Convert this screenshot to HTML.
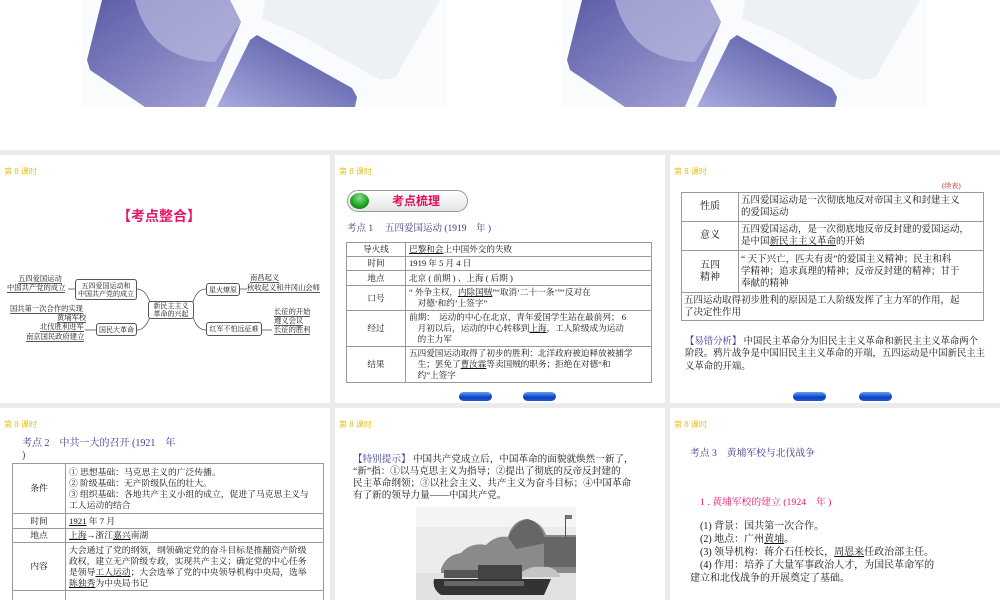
<!DOCTYPE html>
<html><head><meta charset="utf-8"><style>
*{margin:0;padding:0;box-sizing:border-box}
body{width:1000px;height:600px;overflow:hidden;background:#ebebeb;position:relative;font-family:"Liberation Serif","Noto Serif CJK SC","Noto Sans CJK SC",serif;color:#111}
.a{position:absolute;white-space:nowrap}
.s{position:absolute;background:#fff;overflow:hidden}
.k{position:absolute;left:4px;top:11px;font-size:8px;color:#e8c020;font-family:"Liberation Sans","Noto Sans CJK SC",sans-serif}
table{position:absolute;border-collapse:collapse}
td{border:1px solid #999;vertical-align:middle;padding:0 3px}
td.c{text-align:center}
.bx{position:absolute;border:1px solid #555;border-radius:3px;background:#fff;font-size:7px;line-height:8px;text-align:center;display:flex;align-items:center;justify-content:center}
.u{text-decoration:underline}
.mm{position:absolute;font-size:7.3px;line-height:8px;border-bottom:1px solid #555;white-space:nowrap}
.btn{position:absolute;width:33px;height:9px;border-radius:5px;background:linear-gradient(#5aa0ff,#0c3fbf 60%,#2458d8);}
</style></head><body>
<div class="s" style="left:0;top:0;width:1000px;height:150px">
<svg width="1000" height="150" style="position:absolute;left:0;top:0">
<defs><linearGradient id="g1" x1="0" y1="0" x2="1" y2="1"><stop offset="0" stop-color="#5a5ca8"/><stop offset="1" stop-color="#a9a7d8"/></linearGradient>
<linearGradient id="g2" x1="0" y1="1" x2="1" y2="0"><stop offset="0" stop-color="#a7abdc"/><stop offset="1" stop-color="#4a4c9c"/></linearGradient></defs>
<g id="im">
<rect x="82" y="0" width="365" height="107" fill="#fafbfc"/>
<polygon points="265,0 440,0 395,78 380,80 300,35 262,18" fill="#edf0f5"/>
<polygon points="102,0 230,0 241,22 205,107 145,107 90,70 87,60" fill="url(#g1)"/>
<path d="M135,0 Q150,60 215,62 L241,22 L230,0Z" fill="#b8b8e0" opacity=".7"/>
<polygon points="257,35 352,88 357,97 355,107 217,107 250,40" fill="url(#g2)"/>
</g>
<use href="#im" x="480"/>
</svg>
</div>

<!-- row1 slide1 -->
<div class="s" style="left:0;top:155px;width:330px;height:248px">
<div class="k">第 8 课时</div>
<div class="a" style="left:117px;top:51px;font-size:14px;font-weight:bold;color:#e0186c;font-family:'Liberation Sans','Noto Sans CJK SC',sans-serif">【考点整合】</div>
<svg width="330" height="248" style="position:absolute;left:0;top:0" fill="none" stroke="#555" stroke-width=".8">
<path d="M137,134 Q145,134 150,147"/><path d="M137,175 Q145,175 150,162"/>
<path d="M193,147 Q197,134 206,134"/><path d="M193,162 Q197,175 206,175"/>
<path d="M68,134 L75,134"/><path d="M85,175 L96,175"/>
<path d="M240,134 L247,134"/><path d="M262,175 L272,175"/>
</svg>
<div class="bx" style="left:148px;top:146px;width:46px;height:18px">新民主主义<br>革命的兴起</div>
<div class="bx" style="left:75px;top:124px;width:62px;height:21px">五四爱国运动和<br>中国共产党的成立</div>
<div class="bx" style="left:96px;top:168px;width:41px;height:13px">国民大革命</div>
<div class="bx" style="left:206px;top:128px;width:34px;height:13px">星火燎原</div>
<div class="bx" style="left:206px;top:167px;width:56px;height:14px">红军不怕远征难</div>
<div class="mm" style="left:18px;top:120px">五四爱国运动</div>
<div class="mm" style="left:7px;top:129px">中国共产党的成立</div>
<div class="mm" style="left:10px;top:150px">国共第一次合作的实现</div>
<div class="mm" style="left:57px;top:159px">黄埔军校</div>
<div class="mm" style="left:40px;top:168px">北伐胜利进军</div>
<div class="mm" style="left:26px;top:178px">南京国民政府建立</div>
<div class="mm" style="left:250px;top:119px">南昌起义</div>
<div class="mm" style="left:247px;top:129px">秋收起义和井冈山会师</div>
<div class="mm" style="left:274px;top:153px">长征的开始</div>
<div class="mm" style="left:274px;top:162px">遵义会议</div>
<div class="mm" style="left:274px;top:171px">长征的胜利</div>
</div>

<!-- row1 slide2 -->
<div class="s" style="left:335px;top:155px;width:330px;height:248px">
<div class="k">第 8 课时</div>
<div style="position:absolute;left:12px;top:35px;width:121px;height:22px;border-radius:11px;border:1px solid #999;background:linear-gradient(#fff,#e4e4e4)"></div>
<div style="position:absolute;left:15px;top:38px;width:19px;height:16px;border-radius:50%;background:radial-gradient(circle at 50% 30%,#8fe08a,#18a020 60%,#0a6a10)"></div>
<div class="a" style="left:57px;top:37px;font-size:12px;font-weight:bold;color:#e0105a;font-family:'Liberation Sans','Noto Sans CJK SC',sans-serif">考点梳理</div>
<div class="a" style="left:12px;top:65px;font-size:9.5px;color:#3a3a8a">考点 1　 五四爱国运动 (1919　年 )</div>
<table style="left:11px;top:87px;width:306px;font-size:8.6px;line-height:11px">
<tr style="height:14px"><td class="c" style="width:59px">导火线</td><td><span class="u">巴黎和会</span>上中国外交的失败</td></tr>
<tr style="height:14px"><td class="c">时间</td><td>1919 年 5 月 4 日</td></tr>
<tr style="height:15px"><td class="c">地点</td><td>北京 ( 前期 ) 、上海 ( 后期 )</td></tr>
<tr style="height:25px"><td class="c">口号</td><td>“ 外争主权，<span class="u">内除国贼</span>”“取消‘二十一条’”“反对在<br>　对德‘和约’上签字”</td></tr>
<tr style="height:36px"><td class="c">经过</td><td>前期：　运动的中心在北京，青年爱国学生站在最前列； 6<br>　月初以后，运动的中心转移到<span class="u">上海</span>，工人阶级成为运动<br>　的主力军</td></tr>
<tr style="height:36px"><td class="c">结果</td><td>五四爱国运动取得了初步的胜利：北洋政府被迫释放被捕学<br>　生；罢免了<span class="u">曹汝霖</span>等卖国贼的职务；拒绝在对德“和<br>　约”上签字</td></tr>
</table>
<div class="btn" style="left:124px;top:237px"></div><div class="btn" style="left:188px;top:237px"></div>
</div>

<!-- row1 slide3 -->
<div class="s" style="left:670px;top:155px;width:330px;height:248px">
<div class="k">第 8 课时</div>
<div class="a" style="left:272px;top:26px;font-size:7px;color:#d02020">(续表)</div>
<table style="left:11px;top:37px;width:303px;font-size:9.5px;line-height:12px">
<tr style="height:29px"><td class="c" style="width:57px;font-size:10px">性质</td><td style="padding:0 2px">五四爱国运动是一次彻底地反对帝国主义和封建主义<br>的爱国运动</td></tr>
<tr style="height:29px"><td class="c" style="font-size:10px">意义</td><td style="padding:0 2px">五四爱国运动，是一次彻底地反帝反封建的爱国运动，<br>是中国<span class="u">新民主主义革命</span>的开始</td></tr>
<tr style="height:42px"><td class="c" style="font-size:10px">五四<br>精神</td><td style="padding:0 2px">“ 天下兴亡，匹夫有责”的爱国主义精神；民主和科<br>学精神；追求真理的精神；反帝反封建的精神；甘于<br>奉献的精神</td></tr>
<tr style="height:28px"><td colspan="2" style="padding:0 2px">五四运动取得初步胜利的原因是工人阶级发挥了主力军的作用，起<br>了决定性作用</td></tr>
</table>
<div class="a" style="left:15px;top:181px;font-size:9.4px;line-height:12.3px"><span style="color:#3a3a9a">【易错分析】</span> 中国民主革命分为旧民主主义革命和新民主主义革命两个<br>阶段。鸦片战争是中国旧民主主义革命的开端，五四运动是中国新民主主<br>义革命的开端。</div>
<div class="btn" style="left:123px;top:237px"></div><div class="btn" style="left:189px;top:237px"></div>
</div>

<!-- row2 slide1 -->
<div class="s" style="left:0;top:408px;width:330px;height:192px">
<div class="k">第 8 课时</div>
<div class="a" style="left:22px;top:30px;font-size:10px;line-height:12px;color:#3a3a8a">考点 2　中共一大的召开 (1921　年<br>)</div>
<table style="left:12px;top:55px;width:312px;font-size:8.8px;line-height:11px">
<tr style="height:50px"><td class="c" style="width:53px">条件</td><td>① 思想基础：马克思主义的广泛传播。<br>② 阶级基础：无产阶级队伍的壮大。<br>③ 组织基础：各地共产主义小组的成立，促进了马克思主义与<br>工人运动的结合</td></tr>
<tr style="height:15px"><td class="c">时间</td><td><span class="u">1921</span> 年 7 月</td></tr>
<tr style="height:14px"><td class="c">地点</td><td><span class="u">上海</span>→浙江<span class="u">嘉兴</span>南湖</td></tr>
<tr style="height:48px"><td class="c">内容</td><td>大会通过了党的纲领，纲领确定党的奋斗目标是推翻资产阶级<br>政权，建立无产阶级专政，实现共产主义；确定党的中心任务<br>是领导<span class="u">工人运动</span>；大会选举了党的中央领导机构中央局，选举<br><span class="u">陈独秀</span>为中央局书记</td></tr>
<tr style="height:20px"><td></td><td></td></tr>
</table>
</div>

<!-- row2 slide2 -->
<div class="s" style="left:335px;top:408px;width:330px;height:192px">
<div class="k">第 8 课时</div>
<div class="a" style="left:18px;top:46px;font-size:9.6px;line-height:12px"><span style="color:#3a3a9a">【特别提示】</span> 中国共产党成立后，中国革命的面貌就焕然一新了，<br>“新”指：①以马克思主义为指导；②提出了彻底的反帝反封建的<br>民主革命纲领；③以社会主义、共产主义为奋斗目标；④中国革命<br>有了新的领导力量——中国共产党。</div>
<svg style="position:absolute;left:81px;top:99px" width="160" height="93">
<rect width="160" height="93" fill="#ececec"/>
<rect width="160" height="20" fill="#f4f4f4"/>
<path d="M25,62 Q30,48 45,46 Q55,35 70,38 Q80,28 92,30 Q96,14 110,12 Q125,14 130,28 L160,28 L160,70 L25,70Z" fill="#8a8a8a"/>
<path d="M92,30 Q100,14 112,12 Q126,16 130,36 L100,42Z" fill="#666"/>
<rect x="149" y="8" width="1" height="45" fill="#555"/><rect x="150" y="8" width="6" height="4" fill="#777"/>
<rect x="128" y="30" width="32" height="30" fill="#666"/>
<path d="M0,66 L160,66 L160,93 L0,93Z" fill="#e2e2e2"/>
<path d="M100,70 Q112,58 125,60 Q138,58 145,70 Z" fill="#c4c4c4"/>
<rect x="28" y="63" width="50" height="8" fill="#555"/>
<rect x="62" y="58" width="44" height="14" fill="#444"/>
<path d="M18,72 L135,72 L128,88 L25,88 Q16,82 18,72Z" fill="#333"/>
<rect x="28" y="74" width="80" height="5" fill="#666"/>
</svg>
</div>

<!-- row2 slide3 -->
<div class="s" style="left:670px;top:408px;width:330px;height:192px">
<div class="k">第 8 课时</div>
<div class="a" style="left:20px;top:37px;font-size:9.8px;color:#3a3a8a">考点 3　黄埔军校与北伐战争</div>
<div class="a" style="left:30px;top:86px;font-size:9.8px;color:#e0186c">1 .  黄埔军校的建立 (1924　年 )</div>
<div class="a" style="left:20px;top:112px;font-size:10px;line-height:13px">　(1) 背景：国共第一次合作。<br>　(2) 地点：广州<span class="u">黄埔</span>。<br>　(3) 领导机构：蒋介石任校长，<span class="u">周恩来</span>任政治部主任。<br>　(4) 作用：培养了大量军事政治人才，为国民革命军的<br>建立和北伐战争的开展奠定了基础。</div>
</div>
</body></html>
